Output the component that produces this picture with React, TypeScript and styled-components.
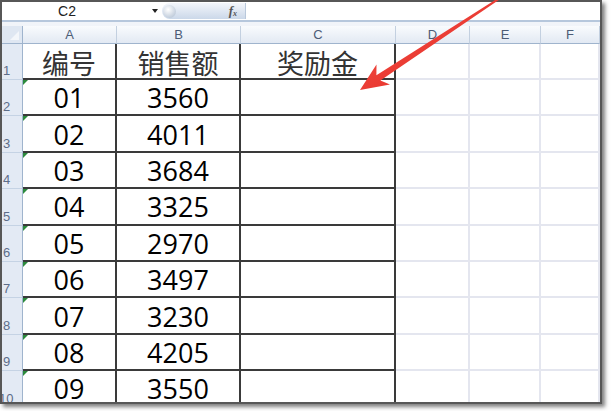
import React from "react";
import styled, { createGlobalStyle } from "styled-components";

const GlobalStyle = createGlobalStyle`
  html, body {
    margin: 0;
    padding: 0;
    background: #fff;
  }
  body {
    font-family: "Liberation Sans", Arial, sans-serif;
  }
`;

const columns = ["A", "B", "C", "D", "E", "F"];

const titles = ["编号", "销售额", "奖励金"];

const sales = [
  ["01", "3560"],
  ["02", "4011"],
  ["03", "3684"],
  ["04", "3325"],
  ["05", "2970"],
  ["06", "3497"],
  ["07", "3230"],
  ["08", "4205"],
  ["09", "3550"]
];

export default function App() {
  return (
    <>
      <GlobalStyle />
      <Page>
        <Frame>
          <FormulaBar>
            <NameBox>C2</NameBox>
            <DropArrow />
            <FxKnob>
              <KnobDot />
              <Fx>
                f<sub>x</sub>
              </Fx>
            </FxKnob>
            <FormulaInput />
          </FormulaBar>
          <Band />
          <Sheet>
            <Corner />
            {columns.map(c => (
              <ColHeader key={c}>{c}</ColHeader>
            ))}

            <RowHeader>1</RowHeader>
            {columns.map((c, i) => (
              <Cell key={c} $dark={i < 3}>
                {titles[i] && <Title>{titles[i]}</Title>}
              </Cell>
            ))}

            {sales.map(([id, amount], r) => (
              <React.Fragment key={id}>
                <RowHeader $shift={r === 8}>{r + 2}</RowHeader>
                <Cell $dark $marker>
                  <Num>{id}</Num>
                </Cell>
                <Cell $dark>
                  <Num>{amount}</Num>
                </Cell>
                <Cell $dark />
                <Cell />
                <Cell />
                <Cell />
              </React.Fragment>
            ))}
          </Sheet>
        </Frame>

        <Arrow viewBox="0 0 611 411">
          <defs>
            <linearGradient id="arrowFill" x1="0" y1="0" x2="1" y2="1">
              <stop offset="0" stopColor="#f4574f" />
              <stop offset="1" stopColor="#e2231b" />
            </linearGradient>
          </defs>
          <polygon
            fill="url(#arrowFill)"
            points="500.5,-1.2 380.4,80.6 390,84.5 360,90 376.5,64.5 376.4,75.2 499.5,-2.8"
          />
        </Arrow>
      </Page>
    </>
  );
}

const Page = styled.div`
  position: relative;
  width: 611px;
  height: 411px;
  overflow: hidden;
  background: #fff;
`;

const Frame = styled.div`
  box-sizing: border-box;
  width: 602px;
  height: 404px;
  border: 2px solid #575757;
  box-shadow: 3px 3px 4px rgba(0, 0, 0, 0.5);
  background: #fff;
  display: flex;
  flex-direction: column;
  overflow: hidden;
`;

const FormulaBar = styled.div`
  flex: 0 0 17px;
  display: flex;
  align-items: stretch;
  background: #fff;
  border-bottom: 2px solid #b6c7dc;
`;

const NameBox = styled.div`
  flex: 0 0 130px;
  display: flex;
  align-items: center;
  justify-content: center;
  font-size: 14px;
  color: #222;
`;

const DropArrow = styled.div`
  flex: 0 0 30px;
  position: relative;
  &::after {
    content: "";
    position: absolute;
    left: 20px;
    top: 7px;
    border-left: 3px solid transparent;
    border-right: 3px solid transparent;
    border-top: 4px solid #222;
  }
`;

const FxKnob = styled.div`
  flex: 0 0 84px;
  display: flex;
  align-items: center;
  justify-content: space-between;
  margin: 1px 0;
  border-radius: 9px 0 0 9px;
  background: linear-gradient(#f3f6fb, #cbd8e9);
  border-right: 1px solid #b9c8db;
  box-sizing: border-box;
`;

const KnobDot = styled.div`
  width: 13px;
  height: 13px;
  margin-left: 1px;
  border-radius: 50%;
  background: radial-gradient(circle at 40% 35%, #ffffff, #c4cfdd 70%, #9fb0c5);
`;

const Fx = styled.span`
  font-family: "Liberation Serif", "Times New Roman", serif;
  font-style: italic;
  font-weight: bold;
  font-size: 13px;
  color: #555;
  margin-right: 8px;
  sub {
    font-size: 8px;
    vertical-align: -1px;
  }
`;

const FormulaInput = styled.div`
  flex: 1;
  background: #fff;
`;

const Band = styled.div`
  flex: 0 0 4px;
  background: #f1f4f9;
`;

const Sheet = styled.div`
  flex: 1;
  display: grid;
  grid-template-columns: 21px 94px 124px 155px 74px 71px 1fr;
  grid-template-rows: 18px 36px repeat(9, 36.4px);
  overflow: hidden;
`;

const Corner = styled.div`
  position: relative;
  background: #dfe7f2;
  border-right: 1px solid #9fb4cd;
  border-bottom: 1px solid #9fb4cd;
  &::after {
    content: "";
    position: absolute;
    right: 3px;
    bottom: 3px;
    border-left: 9px solid transparent;
    border-bottom: 9px solid #f3f6fa;
  }
`;

const ColHeader = styled.div`
  display: flex;
  align-items: center;
  justify-content: center;
  background: linear-gradient(#f9fbfd, #e2e9f3);
  border-right: 1px solid #c3d0e0;
  border-bottom: 1px solid #9fb4cd;
  font-size: 13px;
  color: #4c5c76;
`;

const RowHeader = styled.div<{ $shift?: boolean }>`
  display: flex;
  align-items: flex-end;
  padding: 0 0 1px ${p => (p.$shift ? "0" : "1px")};
  margin-left: ${p => (p.$shift ? "-3px" : "0")};
  background: #e3eaf4;
  border-right: 1px solid #9fb4cd;
  border-bottom: 1px solid #c5d3e4;
  font-size: 13px;
  line-height: 14px;
  color: #5d6d88;
  overflow: hidden;
`;

const Cell = styled.div<{ $dark?: boolean; $marker?: boolean }>`
  position: relative;
  box-sizing: border-box;
  display: flex;
  align-items: center;
  justify-content: center;
  background: #fff;
  border-right: 2px solid ${p => (p.$dark ? "#3a3a3a" : "#e4e6ef")};
  border-bottom: 2px solid ${p => (p.$dark ? "#3a3a3a" : "#e4e6ef")};
  &::before {
    content: "";
    display: ${p => (p.$marker ? "block" : "none")};
    position: absolute;
    left: 0;
    top: 0;
    border-top: 5px solid #2c8a3c;
    border-right: 5px solid transparent;
  }
`;

const Title = styled.span`
  font-family: "Noto Sans CJK SC", "Noto Sans", sans-serif;
  font-size: 27px;
  font-weight: 400;
  color: #333;
  line-height: 1;
  margin-top: 2px;
`;

const Num = styled.span`
  font-family: "Open Sans", "Liberation Sans", sans-serif;
  font-size: 27px;
  font-weight: 500;
  color: #000;
  line-height: 1;
  margin-top: 1px;
`;

const Arrow = styled.svg`
  position: absolute;
  left: 0;
  top: 0;
  width: 611px;
  height: 411px;
  pointer-events: none;
`;
